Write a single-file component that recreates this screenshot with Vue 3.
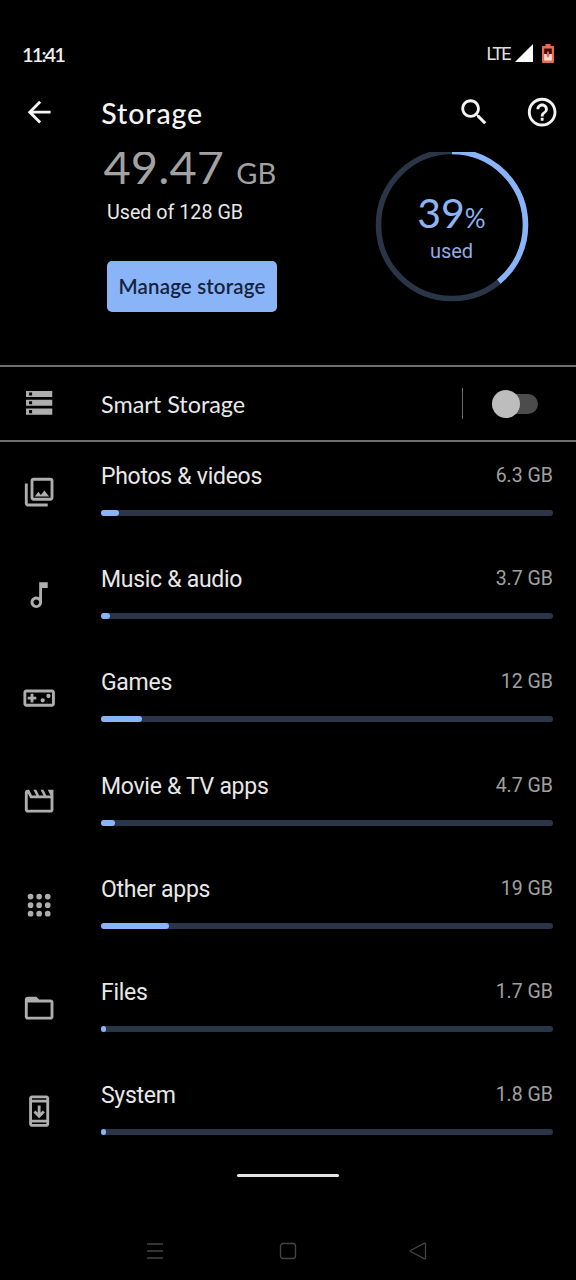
<template>
    <div class="screen">
        <!-- Status bar -->
        <div class="status">
            <span class="time">11:41</span>
            <span class="lte">LTE</span>
            <svg class="signal" viewBox="0 0 18 18"><path d="M18 0v18H0z" /></svg>
            <svg class="battery" viewBox="0 0 12 19">
                <path class="shell" d="M3.500 0h5v2H11q1 0 1 1v15q0 1-1 1H1q-1 0-1-1V3q0-1 1-1h2.500z" />
                <path class="empty" d="M2.200 4.500h7.600v5.500H2.200z" />
                <path class="charge" d="M2.200 10h7.600v6.500H2.200z" />
                <path class="bolt" d="M5 7.500h2v3h1l-2 3.500-2-3.500h1z" />
            </svg>
        </div>

        <!-- App bar -->
        <header class="appbar">
            <svg class="icon back" viewBox="0 0 24 24">
                <path d="M20 11H7.830l5.590-5.590L12 4l-8 8 8 8 1.410-1.410L7.830 13H20v-2z" />
            </svg>
            <h1>Storage</h1>
            <svg class="icon search" viewBox="0 0 24 24">
                <path d="M15.500 14h-.79l-.28-.27C15.410 12.590 16 11.110 16 9.500 16 5.910 13.090 3 9.500 3S3 5.910 3 9.500 5.910 16 9.500 16c1.610 0 3.090-.59 4.230-1.570l.27.28v.79l5 4.990L20.490 19l-4.990-5zm-6 0C7.010 14 5 11.990 5 9.500S7.010 5 9.500 5 14 7.010 14 9.500 11.990 14 9.500 14z" />
            </svg>
            <svg class="icon help" viewBox="0 0 24 24">
                <path d="M11 18h2v-2h-2v2zm1-16C6.480 2 2 6.480 2 12s4.480 10 10 10 10-4.480 10-10S17.520 2 12 2zm0 18c-4.410 0-8-3.590-8-8s3.590-8 8-8 8 3.590 8 8-3.590 8-8 8zm0-14c-2.210 0-4 1.790-4 4h2c0-1.100.9-2 2-2s2 .9 2 2c0 2-3 1.750-3 5h2c0-2.250 3-2.500 3-5 0-2.210-1.790-4-4-4z" />
            </svg>
        </header>

        <!-- Summary, scrolled a little under the app bar -->
        <section class="summary">
            <div class="usage">
                <div class="total">49.47 <span class="unit">GB</span></div>
                <div class="of">Used of 128 GB</div>
                <button class="manage">Manage storage</button>
            </div>
            <div class="ring">
                <svg viewBox="0 0 154 154">
                    <circle class="ring-track" cx="77" cy="77" r="73.500" />
                    <circle class="ring-fill" cx="77" cy="77" r="73.500" pathLength="100" :stroke-dasharray="`${percent} 100`" />
                </svg>
                <div class="ring-text">
                    <div class="percent">{{ percent }}<span>%</span></div>
                    <div class="used">used</div>
                </div>
            </div>
        </section>

        <!-- Smart Storage -->
        <section class="smart">
            <svg class="icon" viewBox="0 0 34 34">
                <path fill-rule="evenodd" d="M4 5h26v6H4zM7 6.500h3v3H7zM4 13.700h26v6H4zM7 15.200h3v3H7zM4 22.400h26v6H4zM7 23.900h3v3H7z" />
            </svg>
            <span class="smart-label">Smart Storage</span>
            <span class="divider"></span>
            <button class="toggle" :class="{ on: smart }" @click="smart = !smart"><span class="knob"></span></button>
        </section>

        <!-- Categories -->
        <ul class="list">
            <li v-for="item in items" :key="item.name" class="row">
                <svg class="icon" viewBox="0 0 24 24"><path :d="item.icon" /></svg>
                <div class="row-body">
                    <div class="row-text">
                        <span class="name">{{ item.name }}</span>
                        <span class="size">{{ item.size }}</span>
                    </div>
                    <div class="bar"><div class="fill" :style="{ width: item.fill + '%' }"></div></div>
                </div>
            </li>
        </ul>

        <div class="home-line"></div>

        <!-- System navigation -->
        <nav class="nav">
            <svg viewBox="0 0 18 18"><path d="M1 2h16M1 9h16M1 16h16" /></svg>
            <svg viewBox="0 0 18 18"><rect x="1.500" y="1.500" width="15" height="15" rx="2.500" /></svg>
            <svg viewBox="0 0 18 18"><path d="M15.500 1.200L2 8.200q-1.200.8 0 1.600l13.500 7q1 .3 1-.7V1.900q0-1-1-.7z" /></svg>
        </nav>
    </div>
</template>

<script setup>
import { ref } from 'vue';

const percent = ref(39);
const smart = ref(false);

const items = [
    {
        name: 'Photos & videos',
        size: '6.3 GB',
        fill: 4,
        icon: 'M20 4v12H8V4h12m0-2H8c-1.100 0-2 .9-2 2v12c0 1.100.9 2 2 2h12c1.100 0 2-.9 2-2V4c0-1.100-.9-2-2-2zm-8.500 9.670l1.690 2.260 2.480-3.100L19 15H9zM2 6v14c0 1.100.9 2 2 2h14v-2H4V6H2z'
    },
    {
        name: 'Music & audio',
        size: '3.7 GB',
        fill: 2.1,
        icon: 'M12 3l.01 10.550c-.59-.34-1.270-.55-2-.55C7.790 13 6 14.790 6 17s1.790 4 4.010 4S14 19.210 14 17V7h4V3h-6zm-1.990 16c-1.100 0-2-.9-2-2s.9-2 2-2 2 .9 2 2-.9 2-2 2z'
    },
    {
        name: 'Games',
        size: '12 GB',
        fill: 9,
        icon: 'M21 6H3c-1.100 0-2 .9-2 2v8c0 1.100.9 2 2 2h18c1.100 0 2-.9 2-2V8c0-1.100-.9-2-2-2zm0 10H3V8h18v8zM6 15h2v-2h2v-2H8V9H6v2H4v2h2zM13 13.500a1.500 1.500 0 1 0 3 0a1.500 1.500 0 1 0-3 0zM17 10.500a1.500 1.500 0 1 0 3 0a1.500 1.500 0 1 0-3 0z'
    },
    {
        name: 'Movie & TV apps',
        size: '4.7 GB',
        fill: 3,
        icon: 'M4 6.470L5.760 10H20v8H4V6.470M22 4h-4l2 4h-3l-2-4h-2l2 4h-3l-2-4H8l2 4H7L5 4H4c-1.100 0-1.990.9-1.990 2L2 18c0 1.100.9 2 2 2h16c1.100 0 2-.9 2-2V4z'
    },
    {
        name: 'Other apps',
        size: '19 GB',
        fill: 15,
        icon: [6, 12, 18].flatMap(y => [4, 10, 16].map(x => `M${x} ${y}a2 2 0 1 0 4 0a2 2 0 1 0-4 0z`)).join('')
    },
    {
        name: 'Files',
        size: '1.7 GB',
        fill: 1,
        icon: 'M20 6h-8l-2-2H4c-1.100 0-1.990.9-1.990 2L2 18c0 1.100.9 2 2 2h16c1.100 0 2-.9 2-2V8c0-1.100-.9-2-2-2zm0 12H4V8h16v10z'
    },
    {
        name: 'System',
        size: '1.8 GB',
        fill: 1,
        icon: 'M17 1.010L7 1c-1.100 0-2 .9-2 2v18c0 1.100.9 2 2 2h10c1.100 0 2-.9 2-2V3c0-1.100-.9-1.990-2-1.990zM17 21H7v-1h10v1zm0-3H7V6h10v12zm0-14H7V3h10v1zM16 13l-1.410-1.410L13 13.170V8h-2v5.170l-1.590-1.580L8 13l4 4 4-4z'
    }
];
</script>

<style>
body {
    background: #000;
}
</style>

<style scoped>
.screen {
    width: 576px;
    height: 1280px;
    overflow: hidden;
    background: #000;
    color: #e8e8e8;
    font-family: Roboto, sans-serif;
    display: flex;
    flex-direction: column;
}

.screen > * {
    flex-shrink: 0;
}

.icon {
    width: 34.3px;
    height: 34.3px;
    fill: #aeaeae;
    flex-shrink: 0;
}

/* Status bar */
.status {
    box-sizing: border-box;
    height: 76px;
    padding: 30px 22px 0 22px;
    display: flex;
    align-items: center;
}

.time {
    flex: 1;
    padding-top: 1px;
    font: 600 20px/24px Lato, sans-serif;
    letter-spacing: -1.9px;
    color: #f0f0f0;
}

.lte {
    font-size: 18px;
    letter-spacing: -1.6px;
    color: #e0e0e0;
}

.signal {
    width: 18px;
    height: 18px;
    margin: 0 9px 0 5px;
    fill: #fff;
}

.battery {
    width: 12px;
    height: 19px;
}

.shell {
    fill: #ec6a50;
}

.empty {
    fill: #3a0d08;
}

.charge {
    fill: #ffe0d6;
}

.bolt {
    fill: #e8604a;
}

/* App bar */
.appbar {
    height: 76px;
    padding: 0 17px 0 22px;
    display: flex;
    align-items: center;
    box-sizing: border-box;
}

.appbar .icon {
    fill: #f4f4f4;
    margin-bottom: 3px;
}

h1 {
    flex: 1;
    margin: 0 0 2px 45px;
    font: 500 28.5px/34px Lato, sans-serif;
    letter-spacing: 0.9px;
    color: #f4f4f4;
}

.search {
    margin-right: 33px;
}

/* Summary */
.summary {
    height: 215px;
    overflow: hidden;
    display: flex;
    justify-content: space-between;
    padding: 0 48.5px 0 103.5px;
    border-bottom: 2px solid #6e6e6e;
    box-sizing: border-box;
}

.total {
    margin-top: -14px;
    font: 400 47px/56px Lato, sans-serif;
    letter-spacing: 0.1px;
    color: #a2a2a2;
    white-space: nowrap;
}

.unit {
    font-size: 29px;
}

.of {
    font-size: 19.7px;
    line-height: 24px;
    margin-left: 3.5px;
}

.manage {
    margin: 36px 0 0 3.5px;
    width: 170px;
    height: 51px;
    padding: 0;
    border: none;
    border-radius: 5px;
    background: #8ab4f8;
    color: #14233f;
    font: 600 20.5px/51px Lato, sans-serif;
    letter-spacing: 0.15px;
    white-space: nowrap;
}

.ring {
    display: grid;
    width: 154px;
    height: 154px;
    margin-top: -4.5px;
    margin-right: -1px;
}

.ring > * {
    grid-area: 1 / 1;
}

.ring circle {
    fill: none;
    stroke-width: 5.5;
}

.ring-track {
    stroke: #2b3548;
}

.ring-fill {
    stroke: #8ab4f8;
    transform: rotate(-90deg);
    transform-origin: 77px 77px;
}

.ring-text {
    text-align: center;
    color: #8fb2f3;
    padding-top: 43px;
}

.percent {
    font: 400 41px/44px Lato, sans-serif;
}

.percent span {
    font-size: 26px;
}

.used {
    font-size: 20px;
    line-height: 24px;
    margin-top: -1px;
    color: #93abe0;
}

/* Smart Storage */
.smart {
    height: 75px;
    box-sizing: border-box;
    border-bottom: 2px solid #6e6e6e;
    padding: 0 38px 0 22px;
    display: flex;
    align-items: center;
}

.smart-label {
    flex: 1;
    margin-left: 44.7px;
    font: 400 23.4px/30px Lato, sans-serif;
}

.divider {
    width: 1.5px;
    height: 31px;
    background: #6a6a6a;
}

.toggle {
    display: flex;
    align-items: center;
    width: 46px;
    height: 20px;
    margin-left: 29px;
    padding: 0;
    border: none;
    border-radius: 10px;
    background: #4c4c4c;
}

.toggle.on {
    justify-content: flex-end;
    background: #42587c;
}

.knob {
    width: 28px;
    height: 28px;
    border-radius: 50%;
    background: #bdbdbd;
    flex-shrink: 0;
}

.on .knob {
    background: #8ab4f8;
}

/* Categories */
.list {
    list-style: none;
    margin: 0;
    padding: 0;
}

.row {
    display: flex;
    height: 103.2px;
    padding: 0 23px 0 22px;
    box-sizing: border-box;
}

.row .icon {
    margin-top: 32.9px;
}

.row-body {
    flex: 1;
    margin-left: 44.7px;
    padding-top: 20px;
}

.row-text {
    display: flex;
    justify-content: space-between;
    line-height: 30px;
}

.name {
    font-size: 23px;
    letter-spacing: -0.28px;
}

.size {
    font-size: 19.5px;
    line-height: 27px;
    color: #a0a0a0;
}

.bar {
    height: 6px;
    margin-top: 18px;
    border-radius: 3px;
    background: #2b3548;
}

.fill {
    height: 6px;
    min-width: 5px;
    border-radius: 3px;
    background: #8ab4f8;
}

/* Bottom of the screen */
.home-line {
    width: 102px;
    height: 3px;
    margin: 10px 0 0 237px;
    border-radius: 2px;
    background: #e4e4e4;
}

.nav {
    display: flex;
    justify-content: space-between;
    padding: 65px 149px 0 146px;
}

.nav svg:nth-child(2) {
    margin-left: 2px;
}

.nav svg {
    width: 18px;
    height: 18px;
    fill: none;
    stroke: #444;
    stroke-width: 1.3;
}
</style>
